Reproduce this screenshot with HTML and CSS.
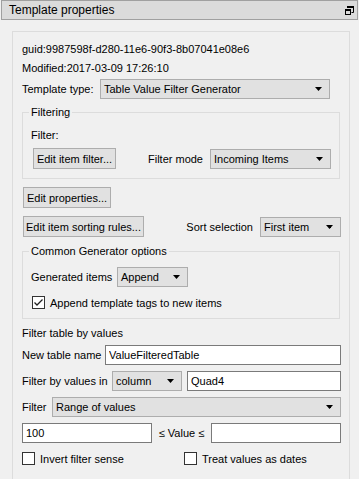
FILE: index.html
```html
<!DOCTYPE html>
<html lang="en">
<head>
    <meta charset="UTF-8">
    <meta name="viewport" content="width=device-width, initial-scale=1.0">
    <title>Template properties</title>
    <link rel="stylesheet" href="styles.css">
</head>
<body>

<div class="titlebar">
    <span>Template properties</span>
    <svg class="restore" width="9" height="9" viewBox="0 0 9 9">
        <path d="M2.5 0.5h6v6h-2" fill="none" stroke="#000"/>
        <rect x="2" y="0" width="7" height="2" fill="#000"/>
        <rect x="0.5" y="3.5" width="5" height="5" fill="none" stroke="#000"/>
        <rect x="0" y="3" width="6" height="2" fill="#000"/>
    </svg>
</div>

<div class="panel">
    <div class="row text-row">guid:9987598f-d280-11e6-90f3-8b07041e08e6</div>
    <div class="row text-row">Modified:2017-03-09 17:26:10</div>

    <div class="row field-row type-row">
        <span class="label type-label">Template type:</span>
        <div class="combo type-combo"><span>Table Value Filter Generator</span><svg class="arrow" width="7" height="4" viewBox="0 0 7 4"><polygon points="0,0 7,0 3.5,4" fill="#000"/></svg></div>
    </div>

    <fieldset class="group filtering">
        <legend>Filtering</legend>
        <div class="row text-row filter-row">Filter:</div>
        <div class="row btn-row">
            <button class="btn btn-filter">Edit item filter...</button>
            <span class="label push">Filter mode</span>
            <div class="combo mode-combo"><span>Incoming Items</span><svg class="arrow" width="7" height="4" viewBox="0 0 7 4"><polygon points="0,0 7,0 3.5,4" fill="#000"/></svg></div>
        </div>
    </fieldset>

    <div class="row btn-row gap-8">
        <button class="btn btn-props">Edit properties...</button>
    </div>

    <div class="row btn-row gap-8">
        <button class="btn btn-sort">Edit item sorting rules...</button>
        <span class="label push">Sort selection</span>
        <div class="combo sort-combo"><span>First item</span><svg class="arrow" width="7" height="4" viewBox="0 0 7 4"><polygon points="0,0 7,0 3.5,4" fill="#000"/></svg></div>
    </div>

    <fieldset class="group common">
        <legend>Common Generator options</legend>
        <div class="row field-row gen-row">
            <span class="label gen-label">Generated items</span>
            <div class="combo gen-combo"><span>Append</span><svg class="arrow" width="7" height="4" viewBox="0 0 7 4"><polygon points="0,0 7,0 3.5,4" fill="#000"/></svg></div>
        </div>
        <div class="row check-row">
            <span class="check indent"><svg width="11" height="11" viewBox="0 0 11 11"><polyline points="1.5,5.5 4,8 9.5,2.5" fill="none" stroke="#222" stroke-width="1.3"/></svg></span>
            <span>Append template tags to new items</span>
        </div>
    </fieldset>

    <div class="row text-row section-title">Filter table by values</div>

    <div class="row field-row name-row">
        <span class="label name-label">New table name</span>
        <input class="field grow" type="text" value="ValueFilteredTable">
    </div>

    <div class="row field-row gap-6">
        <span class="label values-label">Filter by values in</span>
        <div class="combo col-combo"><span>column</span><svg class="arrow" width="7" height="4" viewBox="0 0 7 4"><polygon points="0,0 7,0 3.5,4" fill="#000"/></svg></div>
        <input class="field grow quad" type="text" value="Quad4">
    </div>

    <div class="row field-row gap-6">
        <span class="label filter-label">Filter</span>
        <div class="combo grow"><span>Range of values</span><svg class="arrow" width="7" height="4" viewBox="0 0 7 4"><polygon points="0,0 7,0 3.5,4" fill="#000"/></svg></div>
    </div>

    <div class="row field-row gap-6 range-row">
        <input class="field range" type="text" value="100">
        <span class="label">&le; Value &le;</span>
        <input class="field range" type="text" value="">
    </div>

    <div class="row check-row gap-6">
        <div class="row check-item">
            <span class="check"></span>
            <span>Invert filter sense</span>
        </div>
        <div class="row">
            <span class="check"></span>
            <span>Treat values as dates</span>
        </div>
    </div>
</div>

</body>
</html>
```

FILE: styles.css
```css
body {
    margin: 0;
    background-color: #f0f0f0;
    font-family: "Liberation Sans", Arial, sans-serif;
    font-size: 11px;
    color: #000;
    overflow: hidden;
    height: 479px;
}
.titlebar {
    display: flex;
    align-items: center;
    justify-content: space-between;
    height: 18px;
    margin: 0 1px;
    padding: 0 3px 0 7px;
    border: 1px solid #a0a0a0;
    background-color: #dbdbdb;
    font-size: 12px;
}
.restore {
    display: block;
}
.panel {
    margin: 11px 9px 0 12px;
    padding: 7px 8px 0 9px;
    border: 1px solid #dcdcdc;
    border-bottom: none;
    height: 460px;
}
.row {
    display: flex;
    align-items: center;
}
.text-row {
    height: 19px;
}
.field-row {
    height: 20px;
}
.type-row {
    margin-top: 2px;
}
.type-label {
    width: 78px;
}
.label {
    white-space: nowrap;
}
.push {
    margin-left: auto;
    margin-right: 7px;
}
.combo {
    display: flex;
    align-items: center;
    justify-content: space-between;
    height: 20px;
    box-sizing: border-box;
    padding: 0 7px 0 3px;
    border: 1px solid #adadad;
    background-color: #e1e1e1;
}
.arrow {
    display: block;
    flex: none;
}
.type-combo {
    width: 230px;
}
.mode-combo {
    width: 121px;
}
.sort-combo {
    width: 81px;
}
.gen-combo {
    width: 71px;
}
.col-combo {
    width: 70px;
    flex: none;
}
.group {
    margin: 6px 1px 0 0;
    padding: 0 8px 9px 8px;
    border: 1px solid #dcdcdc;
    min-width: 0;
}
.group legend {
    padding: 0 2px;
    margin-left: -2px;
    line-height: 14px;
}
.filter-row {
    margin-top: 7px;
    height: 18px;
}
.btn-row {
    height: 21px;
    margin-top: 4px;
}
.gap-8 {
    margin-top: 8px;
}
.gap-6 {
    margin-top: 6px;
}
.btn {
    height: 21px;
    margin-left: 1px;
    padding: 0 2px;
    border: 1px solid #adadad;
    background-color: #e1e1e1;
    font-family: inherit;
    font-size: 11px;
    color: #000;
    white-space: nowrap;
}
.btn-filter {
    margin-left: 2px;
    width: 83px;
}
.btn-props {
    width: 88px;
}
.btn-sort {
    width: 121px;
}
.common {
    margin-top: 7px;
    padding-bottom: 6px;
}
.gen-row {
    margin-top: 9px;
}
.gen-label {
    width: 86px;
}
.check-row {
    height: 19px;
}
.common .check-row {
    margin-top: 6px;
}
.check {
    display: flex;
    align-items: center;
    justify-content: center;
    width: 13px;
    height: 13px;
    box-sizing: border-box;
    margin-right: 5px;
    border: 1px solid #333;
    background-color: #fff;
    flex: none;
}
.check svg {
    display: block;
}
.indent {
    margin-left: 1px;
}
.section-title {
    margin-top: 5px;
    height: 18px;
}
.name-row {
    margin-top: 3px;
}
.name-label {
    width: 83px;
}
.values-label {
    width: 90px;
}
.filter-label {
    width: 30px;
}
.grow {
    flex: 1;
    min-width: 0;
}
.field {
    height: 20px;
    box-sizing: border-box;
    margin: 0;
    padding: 0 3px;
    border: 1px solid #7a7a7a;
    background-color: #fff;
    font-family: inherit;
    font-size: 11px;
    color: #000;
    outline: none;
}
.quad {
    margin-left: 5px;
}
.range-row {
    justify-content: space-between;
}
.range {
    width: 130px;
}
.check-item {
    width: 162px;
}
```
